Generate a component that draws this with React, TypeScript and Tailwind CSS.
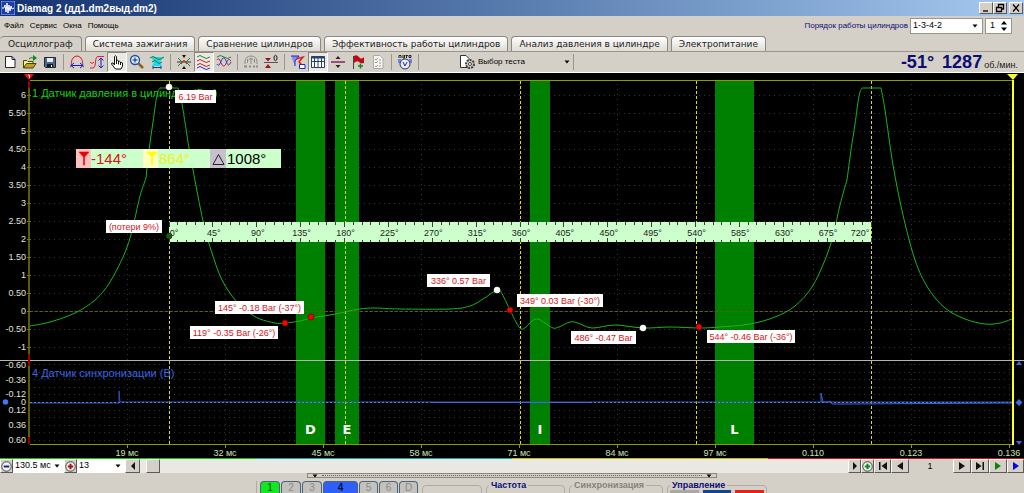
import type { ReactNode } from "react";

const TABS = [
  "Осциллограф",
  "Система зажигания",
  "Сравнение цилиндров",
  "Эффективность работы цилиндров",
  "Анализ давления в цилиндре",
  "Электропитание",
];

const UI_FONT = "font-['Liberation_Sans',Arial,sans-serif]";

type Point = [number, number];

// Catmull-Rom spline turned into cubic beziers
const smooth = (pts: Point[]) => {
  let d = `M${pts[0][0]} ${pts[0][1]}`;
  for (let i = 0; i < pts.length - 1; i++) {
    const p0 = pts[i - 1] ?? pts[i];
    const p1 = pts[i];
    const p2 = pts[i + 1];
    const p3 = pts[i + 2] ?? p2;
    d += ` C${p1[0] + (p2[0] - p0[0]) / 6} ${p1[1] + (p2[1] - p0[1]) / 6}`;
    d += ` ${p2[0] - (p3[0] - p1[0]) / 6} ${p2[1] - (p3[1] - p1[1]) / 6}`;
    d += ` ${p2[0]} ${p2[1]}`;
  }
  return d;
};

const PRESSURE: Point[][] = [
  [[30, 326], [50, 322], [75, 313], [95, 300], [110, 282], [126, 250], [134, 222], [140, 196], [146, 178]],
  [[146, 178], [149, 150], [153, 122], [157, 95], [160, 88]],
  [[160, 88], [178, 88]],
  [[178, 88], [182, 104], [189, 148], [193, 170], [203, 221], [211, 250], [222, 280], [236, 301], [248, 312], [260, 319], [275, 323], [285, 323], [300, 321], [311, 318], [330, 315], [345, 312], [360, 309], [375, 308], [400, 309], [450, 309], [470, 306], [483, 299], [497, 290], [501, 292], [510, 310], [516, 322], [521, 329], [526, 327], [532, 321], [538, 319], [545, 323], [553, 328], [559, 327], [570, 322], [578, 323], [592, 328], [615, 325], [643, 328], [670, 327], [700, 328], [720, 327], [750, 324], [775, 317], [795, 306], [812, 287], [825, 260], [833, 236], [840, 205], [847, 180]],
  [[847, 180], [851, 150], [855, 124], [859, 96], [862, 88]],
  [[862, 88], [881, 88]],
  [[881, 88], [885, 110], [893, 165], [903, 215], [915, 260], [928, 288], [945, 308], [965, 319], [985, 324], [1000, 323], [1012, 319]],
];

const PHASES = [
  { name: "D", x: 296, w: 29 },
  { name: "E", x: 335, w: 24 },
  { name: "I", x: 530, w: 20 },
  { name: "L", x: 715, w: 39 },
];

const Y1 = ["6", "5.50", "5", "4.50", "4", "3.50", "3", "2.50", "2", "1.50", "1", "0.50", "0", "-0.50", "-1"];
const Y2 = [
  ["-0.60", 365],
  ["-0.36", 380],
  ["-0.12", 394],
  ["0", 402],
  ["0.12", 410],
  ["0.36", 425],
  ["0.60", 440],
] as const;
const TIMES = ["19 мс", "32 мс", "45 мс", "58 мс", "71 мс", "84 мс", "97 мс", "0.110", "0.123", "0.136"];

const NOTES = [
  { x: 175, y: 90, w: 41, text: "6.19 Bar" },
  { x: 106, y: 220, w: 56, text: "(потери 9%)" },
  { x: 215, y: 301, w: 89, text: "145° -0.18 Bar (-37°)" },
  { x: 190, y: 326, w: 88, text: "119° -0.35 Bar (-26°)" },
  { x: 427, y: 274, w: 63, text: "336° 0.57 Bar" },
  { x: 517, y: 294, w: 86, text: "349° 0.03 Bar (-30°)" },
  { x: 571, y: 331, w: 65, text: "486° -0.47 Bar" },
  { x: 707, y: 330, w: 88, text: "544° -0.46 Bar (-36°)" },
];

const DOTS: [number, number, string][] = [
  [169, 87, "#fff"],
  [169, 236, "#006a00"],
  [285, 323, "#f00"],
  [311, 317, "#f00"],
  [497, 290, "#fff"],
  [510, 310, "#f00"],
  [643, 328, "#fff"],
  [699, 327, "#f00"],
];

const timeX = (i: number) => Math.round(127 + i * 98.05);
const angleX = (deg: number) => 169 + (deg * 702) / 720;

const Chart = () => (
  <svg viewBox="0 73 1024 385" className="block w-full h-auto bg-black" fontFamily="Liberation Sans, Arial, sans-serif" fontSize="9">
    {/* grid */}
    <g stroke="#34342c" strokeDasharray="1 4" shapeRendering="crispEdges">
      {Y1.map((_, i) => (
        <path key={i} d={`M34 ${95.5 + i * 18}H1012`} />
      ))}
      {[364, 372, 379, 387, 394, 410, 417, 425, 432, 440].map((y) => (
        <path key={y} d={`M34 ${y + 0.5}H1012`} />
      ))}
      {TIMES.map((t, i) => (
        <path key={t} d={`M${timeX(i) + 0.5} 84V444`} />
      ))}
    </g>
    <g fill="#008000">
      {PHASES.map((p) => (
        <rect key={p.name} x={p.x} y="81" width={p.w} height="363" />
      ))}
    </g>
    <g fill="none" shapeRendering="crispEdges">
      <path d="M30 311.5H1012" stroke="#5c5c0a" strokeDasharray="3 2" />
      <path d="M0 360.5H1024" stroke="#b4b4b4" />
      <path d="M30 80.5H1012M30 444.5H1012" stroke="#8c9a00" />
      <path d="M29 81V444" stroke="#5c5c00" strokeWidth="2" />
      <path d="M29 81V88M29 354V366M29 437V444" stroke="#900" strokeWidth="2" />
      <path d="M1013 80V445" stroke="#ffff20" strokeWidth="2" />
      {TIMES.map((t, i) => (
        <path key={t} d={`M${timeX(i) + 0.5} 444V448`} stroke="#8c9a00" />
      ))}
      {Y1.map((t, i) => (
        <path key={t} d={`M27 ${95.5 + i * 18}H31`} stroke="#777700" />
      ))}
      {[169, 345, 520, 696, 871].map((x) => (
        <path key={x} d={`M${x + 0.5} 81V444`} stroke="#dcdc10" strokeDasharray="3 2" />
      ))}
    </g>

    <g fill="#e4e4d8" textAnchor="end">
      {Y1.map((t, i) => (
        <text key={t} x="26" y={98 + i * 18}>{t}</text>
      ))}
      {Y2.map(([t, y]) => (
        <text key={t} x="26" y={y + 3}>{t}</text>
      ))}
    </g>
    <g fill="#c8e4b4" textAnchor="middle">
      {TIMES.map((t, i) => (
        <text key={t} x={timeX(i)} y="456">{t}</text>
      ))}
    </g>
    <text x="32" y="97" fontSize="11" fill="#12d012">1 Датчик давления в цилиндре (Bar)</text>
    <text x="32" y="377" fontSize="11" fill="#3c64e6">4 Датчик синхронизации (В)</text>

    {/* traces */}
    <g fill="none" stroke="#1cb41c" strokeWidth="1">
      {PRESSURE.map((s, i) => (
        <path key={i} d={smooth(s)} />
      ))}
    </g>
    <path d="M30 403H119V391L120 402H430M430 402H1012" fill="none" stroke="#2c52b8" />
    <path d="M30 402.5H1012" fill="none" stroke="#5c84c8" strokeDasharray="2 2" />
    <path d="M430 402.5H590M821 402V393L823 402H828L830 401L832 404H850L1012 403" fill="none" stroke="#3c68dc" />
    <g fill="#fff" fontFamily="DejaVu Sans, sans-serif" fontWeight="bold" fontSize="13" textAnchor="middle">
      {PHASES.map((p) => (
        <text key={p.name} x={p.x + p.w / 2} y="434">{p.name}</text>
      ))}
    </g>

    {/* angle ruler */}
    <rect x="169" y="222" width="702" height="20" fill="#ccffcc" />
    <g stroke="#334433" shapeRendering="crispEdges">
      {Array.from({ length: 81 }, (_, i) => {
        const x = Math.floor(angleX(i * 9)) + 0.5;
        const h = i % 5 ? 3 : 5;
        return <path key={i} d={`M${x} 222V${222 + h}M${x} 242V${242 - h + 1}`} />;
      })}
    </g>
    <g fill="#222" textAnchor="middle">
      {Array.from({ length: 17 }, (_, i) => (
        <text key={i} x={i === 0 ? 174 : i === 16 ? 860 : angleX(i * 45) + 1} y="236">{i * 45}°</text>
      ))}
    </g>

    {/* cursor read-out */}
    <rect x="76" y="149" width="205" height="19" fill="#ccffcc" />
    <rect x="76" y="149" width="15" height="19" fill="#ffc0c0" />
    <rect x="143" y="149" width="15" height="19" fill="#ffffc0" />
    <rect x="210" y="149" width="16" height="19" fill="#c8c0cc" />
    <path d="M79 152H89L84.500 157V165H83.500V157Z" fill="#e00" stroke="#e00" strokeWidth=".6" />
    <path d="M147 152H157L152.500 157V165H151.500V157Z" fill="#ff0" stroke="#ff0" strokeWidth=".6" />
    <path d="M218.500 154.500L224 164.500H213Z" fill="none" stroke="#222" />
    <g fontSize="15">
      <text x="91" y="164" fill="#e01010">-144°</text>
      <text x="159" y="164" fill="#f0f020">864°</text>
      <text x="227" y="164" fill="#000">1008°</text>
    </g>

    {NOTES.map((n) => (
      <g key={n.text}>
        <rect x={n.x} y={n.y} width={n.w} height="13" fill="#fff" />
        <text x={n.x + n.w / 2} y={n.y + 10} fill="#d81420" textAnchor="middle">{n.text}</text>
      </g>
    ))}
    {DOTS.map(([x, y, fill]) => (
      <circle key={x + y} cx={x} cy={y} r="3" fill={fill} stroke={fill === "#fff" ? "#fff" : "#500"} strokeWidth=".6" />
    ))}

    {/* markers */}
    <path d="M24 74H34L29 80Z" fill="#f01010" />
    <path d="M28 75h1.500v3" fill="none" stroke="#fff" strokeWidth=".8" />
    <path d="M1007 74H1018L1013 80Z" fill="#ffff20" />
    <circle cx="5.500" cy="402" r="2.800" fill="#3c78f0" />
    <path d="M1019 361L1022 365H1016ZM1019 445L1022 441H1016ZM1019 399L1022.500 402.500L1019 406L1015.500 402.500Z" fill="#3c68e6" />
  </svg>
);

const ToolButton = ({ label, pressed, children }: { label: string; pressed?: boolean; children: ReactNode }) => (
  <button
    aria-label={label}
    className={`w-5 h-5 flex items-center justify-center border ${
      pressed ? "bg-[#ebe9e4] border-[#8a867e] border-b-white border-r-white" : "border-transparent"
    }`}
  >
    <svg viewBox="0 0 16 16" className="w-4 h-4 shrink-0" fill="none" strokeWidth="1">
      {children}
    </svg>
  </button>
);

const Separator = () => <div className="w-px h-4 mx-[3px] bg-[#9a968e]" />;

const Toolbar = () => (
  <div className="h-[22px] flex items-center border-t border-[#9a968e] border-b border-b-white pr-1.5">
    <ToolButton label="Новый">
      <path d="M3.500 2.500H10L13 5.500V13.500H3.500Z" fill="#fff" stroke="#222" />
      <path d="M10 2.500V5.500H13" stroke="#222" />
    </ToolButton>
    <ToolButton label="Открыть">
      <path d="M1.500 14V6.500H5L6 7.500H11V9" fill="#f8f088" stroke="#4c4400" />
      <path d="M1.500 14L4.500 9.500H14L11 14Z" fill="#b8a428" stroke="#4c4400" />
      <path d="M11 1L15 4L11 7Z" fill="#0a8a1c" />
      <path d="M7 5Q8 3 12 4" stroke="#0a8a1c" />
    </ToolButton>
    <ToolButton label="Сохранить">
      <path d="M2.500 3.500H13.500V13.500H3.500L2.500 12.500Z" fill="#50648c" stroke="#202838" />
      <path d="M5 4H11V8H5Z" fill="#e8ecf4" />
      <path d="M5 10H11V13H5Z" fill="#141820" />
      <path d="M9 11H10V13H9Z" fill="#fff" />
    </ToolButton>
    <Separator />
    <ToolButton label="Период">
      <path d="M1 13C3 13 1.500 7 4 4Q8 0 12 4C14.500 7 13 13 15 13" stroke="#e01020" />
      <path d="M2 11.500H14M5 9L2 11.500L5 14M11 9L14 11.500L11 14" stroke="#1020d0" />
    </ToolButton>
    <ToolButton label="Амплитуда">
      <path d="M1 14H4C8 13 5 3 9 2.500H15M1 8Q3 11 5 8" stroke="#e02030" />
      <path d="M12 4V14M9.500 6.500L12 4L14.500 6.500M9.500 11.500L12 14L14.500 11.500" stroke="#1020d0" />
    </ToolButton>
    <ToolButton label="Рука" pressed>
      <path d="M5.500 9V2.500Q6.500 1 7.500 2.500V7.500V6.500Q9 5.500 9.500 7V8Q10.500 6.500 11.500 8V9Q13 7.500 13.500 9V12L12 15H6.500L2.500 10Q2.500 8.500 4 9L5.500 11Z" fill="#fff" stroke="#111" />
      <path d="M7.500 7V10M9.500 8V10.500M11.500 9V11" stroke="#111" />
    </ToolButton>
    <ToolButton label="Масштаб">
      <circle cx="6" cy="6" r="4.500" fill="#d8ecff" stroke="#1c50a0" strokeWidth="1.300" />
      <path d="M3.500 6H8.500M6 3.500V8.500" stroke="#102080" />
      <path d="M9.500 9.500L14 14" stroke="#8a6420" strokeWidth="2.500" />
    </ToolButton>
    <ToolButton label="Сжать">
      <path d="M2 3H14L11 8L13 12H3L5 8Z" fill="#20d8e8" />
      <path d="M1 4Q4 1 7 4T15 3M3 8Q6 5 8 8T13 8" stroke="#087850" />
      <path d="M4 13.500H12M4 12V15M12 12V15" stroke="#104088" />
    </ToolButton>
    <Separator />
    <ToolButton label="Центр">
      <path d="M1 8H15" stroke="#333" />
      <path d="M2 4L6 8L2 12M14 4L10 8L14 12" stroke="#108838" />
      <path d="M5 10L8 6L11 10" stroke="#d02020" />
      <path d="M6 1H10L8 4ZM6 15H10L8 12Z" fill="#111" />
    </ToolButton>
    <ToolButton label="Раздельно" pressed>
      <path d="M1 3Q4 0 7 3T14 3" stroke="#108838" />
      <path d="M1 7Q4 4 7 7T14 7" stroke="#d01818" />
      <path d="M1 11Q4 8 7 11T14 11" stroke="#d01818" />
      <path d="M1 14Q4 11 7 14T14 14" stroke="#1838d0" />
    </ToolButton>
    <ToolButton label="Вместе">
      <path d="M1 3Q4 0 8 3T15 3" stroke="#108838" />
      <path d="M1 6C4 1 5 13 8 12S11 2 15 7" stroke="#d01818" />
      <path d="M1 10C4 15 5 3 8 4S11 16 15 8" stroke="#1838d0" />
    </ToolButton>
    <Separator />
    <ToolButton label="Авто">
      <path d="M2 10V7Q3 2 8 2Q13 2 14 7V10M8 4V10M5.500 6L8 4L10.500 6M4.500 5V9M11.500 5V9" stroke="#8c8c88" />
      <path d="M1 12.500H4M6 12.500H8M10 12.500H12M13 12.500H15" stroke="#8c8c88" strokeWidth="2" />
    </ToolButton>
    <ToolButton label="Ноль">
      <path d="M1 8.500H15" stroke="#555" />
      <path d="M2 4H8L5 7.500ZM2 14H8L5 10Z" fill="#a01020" />
      <ellipse cx="12.500" cy="4" rx="1.500" ry="2.800" stroke="#222" />
    </ToolButton>
    <Separator />
    <ToolButton label="Фильтр">
      <path d="M1 2H9L5 7V12" fill="#8090f0" stroke="#1828d0" />
      <path d="M6 5L13 3L9 8L12 11" stroke="#e02020" strokeWidth="1.500" />
      <path d="M9.500 10.500H15V14.500H9.500Z" fill="#fff" stroke="#1828d0" />
    </ToolButton>
    <ToolButton label="Таблица" pressed>
      <path d="M1.500 2.500H14.500V13.500H1.500Z" fill="#fff" stroke="#28406c" />
      <path d="M1.500 3.500H14.500" stroke="#28406c" strokeWidth="2" />
      <path d="M4.500 3V13M8 3V13M11.500 3V13M1.500 7.500H14.500" stroke="#28406c" />
    </ToolButton>
    <ToolButton label="Линия">
      <path d="M1 8H15" stroke="#882068" strokeWidth="1.500" />
      <path d="M8 2L10.500 5H5.500ZM8 14L10.500 11H5.500Z" fill="#222" />
    </ToolButton>
    <ToolButton label="Флаг">
      <path d="M3.500 2V15" stroke="#444" />
      <path d="M4 2Q7 0 9 3T14 3V9Q11 10 9 8T4 9Z" fill="#c00818" />
      <path d="M8 12H13M10.500 9.500V14.500" stroke="#108820" strokeWidth="1.500" />
    </ToolButton>
    <ToolButton label="Отчёт">
      <path d="M3.500 1.500H10L13 4.500V14.500H3.500Z" fill="#f4f4f0" stroke="#aaa" />
      <path d="M5 5L6 6L8 4M5 8L6 9L8 7M5 12L6 13L8 11M9 6H11M9 9H11M9 12H11" stroke="#999" />
    </ToolButton>
    <Separator />
    <ToolButton label="Автозапуск">
      <path d="M1 5H4V9H1ZM12 5H15V9H12Z" fill="#6888e8" />
      <circle cx="8" cy="10" r="5" fill="#e8eeff" stroke="#334" />
      <path d="M6 8L8 12L10 8" stroke="#1828d0" />
      <path d="M2 4V1.500H4V4M6 1V4H7.500V1M8.500 1.500H11M9.500 1.500V4M12 1.500H14V3.500H12Z" stroke="#222" />
    </ToolButton>
    <Separator />
    <button className="flex items-center ml-9 h-5 w-28 text-[8px] text-black">
      <svg viewBox="0 0 18 16" className="w-[18px] h-4 mr-0.5" fill="none">
        <path d="M2.500 1.500H8L11 4.500V13.500H2.500Z" fill="#fff" stroke="#333" />
        <circle cx="12" cy="10" r="4" fill="#c8ccc4" stroke="#444" strokeDasharray="2 1" strokeWidth="2" />
        <circle cx="12" cy="10" r="1.500" fill="#fff" stroke="#444" />
      </svg>
      Выбор теста
      <Arrow className="ml-auto" />
    </button>
    <Separator />
    <div className="ml-auto flex items-baseline text-[#0c0c74]">
      <span className="text-lg leading-5 font-bold">-51°</span>
      <span className="text-lg leading-5 font-bold ml-2">1287</span>
      <span className="text-[9px] ml-0.5 text-[#222]">об./мин.</span>
    </div>
  </div>
);

const Arrow = ({ className = "" }: { className?: string }) => (
  <svg viewBox="0 0 6 4" className={`w-1.5 h-1 shrink-0 pointer-events-none ${className}`}>
    <path d="M0.500 0.500H5.500L3 3.500Z" fill="#000" />
  </svg>
);

const Select = ({ label, value, className }: { label: string; value: string; className: string }) => (
  <div className={`relative flex items-center bg-white ${className}`}>
    <select id={label} aria-label={label} className="appearance-none w-full h-full pl-0.5 bg-transparent outline-none">
      <option>{value}</option>
    </select>
    <Arrow className="absolute right-1" />
  </div>
);

const raised = "border border-white border-r-[#5c5a56] border-b-[#5c5a56] bg-[#d4d0c8]";

const WindowButton = ({ label, d }: { label: string; d: string }) => (
  <button aria-label={label} className={`w-3.5 h-3 flex items-center justify-center ${raised}`}>
    <svg viewBox="0 0 10 10" className="w-2.5 h-2.5 shrink-0" fill="none" stroke="#000" strokeWidth="1.300">
      <path d={d} />
    </svg>
  </button>
);

const NavButton = ({ label, d, color = "#111", className = "w-[17px]" }: { label: string; d: string; color?: string; className?: string }) => (
  <button aria-label={label} className={`h-full shrink-0 flex items-center justify-center ${raised} ${className}`}>
    <svg viewBox="0 0 10 8" className="w-2.5 h-2" fill={color}>
      <path d={d} />
    </svg>
  </button>
);

const RoundButton = ({ label, color, minus }: { label: string; color: string; minus?: boolean }) => (
  <button aria-label={label} className={`w-[13px] h-full shrink-0 flex items-center justify-center ${raised}`}>
    <svg viewBox="0 0 10 10" className="w-[11px] h-[11px] shrink-0" fill="none">
      <circle cx="5" cy="5" r="4.300" fill="#f4f4f0" stroke="#333" strokeWidth=".8" />
      <path d={minus ? "M2.500 5H7.500" : "M2.500 5H7.500M5 2.500V7.500"} stroke={color} strokeWidth="1.800" />
    </svg>
  </button>
);

const TimeBar = () => (
  <div className="h-3.5 flex text-[9px] bg-[#d4d0c8]">
    <RoundButton label="Уменьшить" color="#1820a0" minus />
    <Select label="Развёртка" value="130.5 мс" className="w-[51px]" />
    <RoundButton label="Увеличить" color="#b01010" />
    <Select label="Масштаб времени" value="13" className="w-12" />
    <NavButton label="Прокрутка влево" d="M7 0V8L3 4Z" className="w-[15px]" />
    <div className="grow bg-[#eae8e3] pl-1.5">
      <div className={`w-3.5 h-full ${raised}`} />
    </div>
    <NavButton label="Прокрутка вправо" d="M3 0V8L7 4Z" className="w-[13px]" />
    <RoundButton label="Добавить" color="#108820" />
    <NavButton label="В начало" d="M1 0H2.500V8H1ZM9 0V8L3.500 4Z" />
    <NavButton label="Назад" d="M8 0V8L2 4Z" className="w-[18px]" />
    <span className="w-11 pr-0.5 text-center leading-[14px]">1</span>
    <NavButton label="Вперёд" d="M2 0V8L8 4Z" className="w-[18px]" />
    <NavButton label="В конец" d="M1 0V8L6.500 4ZM7.500 0H9V8H7.500Z" className="w-[18px]" />
    <NavButton label="Пуск" d="M2 0V8L8 4Z" color="#108010" className="w-[18px]" />
    <NavButton label="Пуск всех" d="M2 0V8L8 4Z" color="#0808f0" />
  </div>
);

const CHANNELS = [
  ["1", "w-5 bg-[#10e820] text-[#064806]"],
  ["2", "w-5 bg-[#c4c2be] text-[#8a8a8a]"],
  ["3", "w-5 bg-[#c4c2be] text-[#8a8a8a]"],
  ["4", "w-[35px] bg-[#2c60f8] text-[#081040] font-bold"],
  ["5", "w-[19px] bg-[#c4c2be] text-[#8a8a8a]"],
  ["6", "w-[19px] bg-[#c4c2be] text-[#8a8a8a]"],
  ["D", "w-[19px] bg-[#c4c2be] text-[#8a8a8a]"],
];

const Group = ({ title, className, children }: { title: string; className: string; children?: ReactNode }) => (
  <fieldset className={`h-10 px-0.5 mr-1 shrink-0 border border-[#b0aca4] rounded-sm ${className}`}>
    <legend className="px-0.5 text-[9px] leading-[9px] font-bold">{title}</legend>
    {children}
  </fieldset>
);

const BottomPanel = () => (
  <div className="flex flex-col items-center">
    <div className="w-[410px] h-[5px] flex items-center justify-between px-1 border border-[#8c8880]">
      <Arrow />
      <div className="grow mx-1 border-t border-dotted border-[#666]" />
      <Arrow />
    </div>
    <div className="w-[512px] h-[15px] pt-[3px] flex items-start overflow-hidden">
      <div className="flex gap-px pl-[3px] mr-1 border-l border-[#b0aca4]">
        {CHANNELS.map(([name, style]) => (
          <button key={name} className={`h-3 text-[10px] leading-[11px] border border-b-0 border-[#4c6478] rounded-t-sm ${style}`}>
            {name}
          </button>
        ))}
      </div>
      <div className="w-[60px] h-10 mt-1 mr-1 shrink-0 border border-[#b0aca4] rounded-sm" />
      <Group title="Частота" className="w-[79px] text-[#0c0c74]" />
      <Group title="Синхронизация" className="w-[94px] text-[#85827c]" />
      <Group title="Управление" className="w-[100px] text-[#0c0c74]">
        <div className="flex gap-1">
          <button aria-label="Стоп" className="grow h-4 bg-[#aaa8a4]" />
          <button aria-label="Просмотр" className="grow h-4 bg-[#10488c]" />
          <button aria-label="Запись" className="grow h-4 bg-[#e82018]" />
        </div>
      </Group>
    </div>
  </div>
);

export default function App() {
  return (
    <div className={`min-h-screen bg-[#d4d0c8] text-black ${UI_FONT}`}>
      <header className="h-4 flex items-center pr-px bg-linear-to-r from-[#14326f] to-[#a6caf0]">
        <svg viewBox="0 0 14 14" className="w-3.5 h-3.5 mx-px">
          <rect width="14" height="14" fill="#1c3cb4" stroke="#9cb8f0" />
          <path d="M1 7H3L4 4L5 11L6 2L7 12L8 4L9 10L10 5L11 8L13 7" fill="none" stroke="#fff" />
        </svg>
        <h1 className="ml-px text-[10px] font-bold text-white">Diamag 2 (дд1.dm2выд.dm2)</h1>
        <div className="ml-auto flex">
          <WindowButton label="Свернуть" d="M2 8H7" />
          <WindowButton label="Восстановить" d="M3.500 4V1.500H8.500V6H7M1.500 4.500H6.500V8.500H1.500Z" />
          <div className="w-0.5" />
          <WindowButton label="Закрыть" d="M2 1.500L8 8.500M8 1.500L2 8.500" />
        </div>
      </header>

      <div className="h-5 flex items-center">
        <nav className="flex gap-1.5 pl-1 text-[8px]">
          {["Файл", "Сервис", "Окна", "Помощь"].map((m) => (
            <button key={m}>{m}</button>
          ))}
        </nav>
        <div className="ml-auto flex items-center pr-3 text-[8px]">
          <label htmlFor="Порядок" className="mr-0.5 text-[#0c0c74]">Порядок работы цилиндров</label>
          <Select label="Порядок" value="1-3-4-2" className="w-[73px] h-4 text-[9px] border border-[#9a968e]" />
          <div className="relative ml-0.5 w-[27px] h-4 flex items-center bg-white border border-[#9a968e]">
            <input aria-label="Цилиндр" defaultValue="1" className="w-full pl-1 text-[9px] outline-none" />
            <svg viewBox="0 0 6 10" className="absolute right-1 w-1.5 h-2.5">
              <path d="M3 0L6 3.500H0ZM3 10L6 6.500H0Z" />
            </svg>
          </div>
        </div>
      </div>

      <div role="tablist" className="flex items-end gap-[3px] h-[15px] text-[9px] text-[#222] font-['DejaVu_Sans',Verdana,sans-serif]">
        {TABS.map((tab, i) => (
          <button
            key={tab}
            role="tab"
            aria-selected={i === 0}
            className={`h-full leading-[14px] whitespace-nowrap border border-b-0 border-[#8c8880] rounded-t-sm ${
              i === 0 ? "px-2 border-l-0 bg-[#d4d0c8]" : "px-[7px] bg-linear-to-b from-white to-[#dedbd4]"
            }`}
          >
            {tab}
          </button>
        ))}
      </div>
      <Toolbar />
      <Chart />
      <div className="h-px flex">
        <div className="grow bg-[#18b818]" />
        <div className="grow bg-[#18a0b0]" />
        <div className="grow bg-[#c8b818]" />
        <div className="grow bg-[#c01818]" />
      </div>
      <TimeBar />
      <BottomPanel />
    </div>
  );
}
